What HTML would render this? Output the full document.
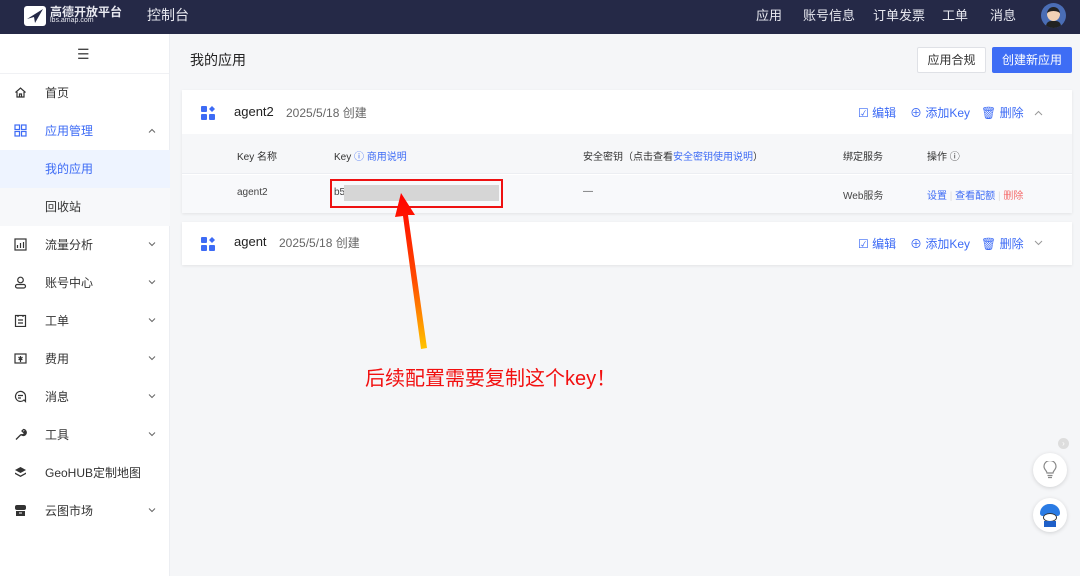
<!DOCTYPE html>
<html><head><meta charset="utf-8"><style>
*{margin:0;padding:0;box-sizing:border-box}
body{width:1080px;height:576px;overflow:hidden;background:#f5f6f8;font-family:"Liberation Sans","Noto Sans CJK SC",sans-serif;font-size:12px;color:#333;position:relative}
.abs{position:absolute}
.hdr{left:0;top:0;width:1080px;height:34px;background:#252947}
.hdr span{position:absolute;color:#e8e9f0;font-size:13px;top:5px}
.side{left:0;top:34px;width:170px;height:542px;background:#fff;border-right:1px solid #eceef2}
.mi{position:absolute;left:0;width:170px;height:38px;font-size:12px;color:#333}
.mi .t{position:absolute;left:45px;top:10px}
.mi .ic{position:absolute;left:14px;top:12px;width:13px;height:13px}
.mi .ch{position:absolute;left:148px;top:16px;width:8px;height:5px}
.card{position:absolute;left:182px;width:890px;background:#fff;box-shadow:0 1px 3px rgba(0,0,0,.08)}
.blue{color:#3d6bf5}
.act{position:absolute;font-size:12px;color:#3d6bf5}
</style></head><body>
<div class="abs hdr">
  <svg class="abs" style="left:23px;top:5px" width="24" height="22" viewBox="0 0 24 22"><rect x="1" y="1" width="22" height="20" rx="3" fill="#fff"/><path d="M4 14 L20 4 L12 18 L11 12 Z" fill="#252947"/></svg>
  <span style="left:50px;top:3px;font-size:12px;font-weight:bold">高德开放平台</span>
  <span style="left:50px;top:17px;font-size:7px">lbs.amap.com</span>
  <span style="left:147px;top:5px;font-size:14px">控制台</span>
  <span style="left:756px">应用</span><span style="left:803px">账号信息</span><span style="left:873px">订单发票</span><span style="left:942px">工单</span><span style="left:990px">消息</span>
  <div class="abs" style="left:1041px;top:3px;width:25px;height:25px;border-radius:50%;background:#4a6db5;overflow:hidden"><div class="abs" style="left:6px;top:4px;width:13px;height:14px;border-radius:50%;background:#f2d2b5;border-top:4px solid #222"></div><div class="abs" style="left:5px;top:18px;width:15px;height:8px;background:#222;border-radius:5px 5px 0 0"></div></div>
</div>
<div class="abs side">
  <div class="abs" style="left:77px;top:12px;font-size:14px;color:#444">☰</div>
  <div class="abs" style="left:0;top:39px;width:169px;height:1px;background:#f0f1f4"></div>
  <div class="mi" style="top:40px"><svg class="ic" viewBox="0 0 13 13"><path d="M1.5 6.5L6.5 2l5 4.5M3 6v5h7V6M5.5 11V8h2v3" fill="none" stroke="#333" stroke-width="1.2"/></svg><span class="t">首页</span></div>
  <div class="mi" style="top:78px;color:#3d6bf5"><svg class="ic" viewBox="0 0 13 13" fill="none" stroke="#3d6bf5" stroke-width="1.2"><rect x="1" y="1" width="4.5" height="4.5"/><rect x="7.5" y="1" width="4.5" height="4.5"/><rect x="1" y="7.5" width="4.5" height="4.5"/><rect x="7.5" y="7.5" width="4.5" height="4.5"/></svg><span class="t">应用管理</span><svg class="ch" viewBox="0 0 8 5"><path d="M1 4.5L4 1.5 7 4.5" fill="none" stroke="#666"/></svg></div>
  <div class="mi" style="top:116px;background:#eef4ff;color:#3d6bf5"><span class="t">我的应用</span></div>
  <div class="mi" style="top:154px;background:#f7f8fa"><span class="t">回收站</span></div>
  <div class="mi" style="top:192px"><svg class="ic" viewBox="0 0 13 13" fill="none" stroke="#333" stroke-width="1.2"><rect x="1" y="1" width="11" height="11"/><path d="M3.5 10V7M6.5 10V5M9.5 10V4"/></svg><span class="t">流量分析</span><svg class="ch" viewBox="0 0 8 5"><path d="M1 .5L4 3.5 7 .5" fill="none" stroke="#666"/></svg></div>
  <div class="mi" style="top:230px"><svg class="ic" viewBox="0 0 13 13" fill="none" stroke="#333" stroke-width="1.2"><circle cx="6.5" cy="4" r="2.8"/><rect x="1.5" y="8.5" width="10" height="3.5" rx="1.7"/></svg><span class="t">账号中心</span><svg class="ch" viewBox="0 0 8 5"><path d="M1 .5L4 3.5 7 .5" fill="none" stroke="#666"/></svg></div>
  <div class="mi" style="top:268px"><svg class="ic" viewBox="0 0 13 13" fill="none" stroke="#333" stroke-width="1.2"><rect x="1.5" y="1.5" width="10" height="11"/><path d="M4 1v2M9 1v2M4 6h5M4 9h5"/></svg><span class="t">工单</span><svg class="ch" viewBox="0 0 8 5"><path d="M1 .5L4 3.5 7 .5" fill="none" stroke="#666"/></svg></div>
  <div class="mi" style="top:306px"><svg class="ic" viewBox="0 0 13 13" fill="none" stroke="#333" stroke-width="1.2"><rect x="1" y="2" width="11" height="9"/><path d="M6.5 4v6M4.5 5l2 2 2-2M4.5 7.5h4"/></svg><span class="t">费用</span><svg class="ch" viewBox="0 0 8 5"><path d="M1 .5L4 3.5 7 .5" fill="none" stroke="#666"/></svg></div>
  <div class="mi" style="top:344px"><svg class="ic" viewBox="0 0 13 13" fill="none" stroke="#333" stroke-width="1.2"><path d="M11.5 11.5L10 10A5 5 0 1 1 11.5 6.5Z"/><path d="M4 5.5h5M4 8h3"/></svg><span class="t">消息</span><svg class="ch" viewBox="0 0 8 5"><path d="M1 .5L4 3.5 7 .5" fill="none" stroke="#666"/></svg></div>
  <div class="mi" style="top:382px"><svg class="ic" viewBox="0 0 13 13" fill="none" stroke="#333" stroke-width="1.3"><path d="M2 11.5L7 6.5M7 6.5a3 3 0 1 0 2.5-5L8 3l1.5 1.5L11 3a3 3 0 0 1-4 3.5"/></svg><span class="t">工具</span><svg class="ch" viewBox="0 0 8 5"><path d="M1 .5L4 3.5 7 .5" fill="none" stroke="#666"/></svg></div>
  <div class="mi" style="top:420px"><svg class="ic" viewBox="0 0 13 13" fill="#333"><path d="M6.5 1L12 4 6.5 7 1 4Z"/><path d="M1 6.5L6.5 9.5 12 6.5v1.5L6.5 11 1 8Z"/></svg><span class="t">GeoHUB定制地图</span></div>
  <div class="mi" style="top:458px"><svg class="ic" viewBox="0 0 13 13" fill="#333"><rect x="1" y="1" width="11" height="5" rx="2"/><rect x="2" y="7" width="9" height="5"/><rect x="5" y="8.5" width="3" height="1" fill="#fff"/></svg><span class="t">云图市场</span><svg class="ch" viewBox="0 0 8 5"><path d="M1 .5L4 3.5 7 .5" fill="none" stroke="#666"/></svg></div>
</div>
<div class="abs" style="left:190px;top:50px;font-size:14px;color:#222">我的应用</div>
<div class="abs" style="left:917px;top:47px;width:69px;height:26px;background:#fff;border:1px solid #dfe1e6;border-radius:2px;text-align:center;line-height:24px;color:#333">应用合规</div>
<div class="abs" style="left:992px;top:47px;width:80px;height:26px;background:#3e6df5;border-radius:2px;text-align:center;line-height:26px;color:#fff">创建新应用</div>

<div class="card" style="top:90px;height:123px">
  <svg class="abs" style="left:19px;top:16px" width="14" height="14" viewBox="0 0 14 14" fill="#3d6bf5"><rect x="0" y="0" width="6" height="6" rx="1"/><rect x="0" y="8" width="6" height="6" rx="1"/><rect x="8" y="8" width="6" height="6" rx="1"/><path d="M11 0l3 3-3 3-3-3z"/></svg>
  <div class="abs" style="left:52px;top:14px;font-size:13px;color:#222">agent2</div>
  <div class="abs" style="left:104px;top:14px;font-size:12px;color:#666">2025/5/18 创建</div>
  <div class="act" style="left:676px;top:14px">☑ 编辑</div>
  <div class="act" style="left:728px;top:14px">⊕ 添加Key</div>
  <div class="act" style="left:799px;top:14px">🗑 删除</div>
  <svg class="abs" style="left:852px;top:20px" width="9" height="6" viewBox="0 0 9 6"><path d="M1 5L4.5 1.5 8 5" fill="none" stroke="#999"/></svg>
  <div class="abs" style="left:0;top:44px;width:890px;height:40px;background:#f6f7f9;border-bottom:1px solid #eceef2"></div>
  <div class="abs" style="left:55px;top:58px;font-size:10px;color:#333">Key 名称</div>
  <div class="abs" style="left:152px;top:58px;font-size:10px;color:#333">Key <span class="blue">ⓘ 商用说明</span></div>
  <div class="abs" style="left:401px;top:58px;font-size:10px;color:#333">安全密钥（点击查看<span class="blue">安全密钥使用说明</span>）</div>
  <div class="abs" style="left:661px;top:58px;font-size:10px;color:#333">绑定服务</div>
  <div class="abs" style="left:745px;top:58px;font-size:10px;color:#333">操作 ⓘ</div>
  <div class="abs" style="left:0;top:85px;width:890px;height:38px;background:#f8f9fb"></div>
  <div class="abs" style="left:55px;top:97px;font-size:10px;color:#444">agent2</div>
  <div class="abs" style="left:152px;top:97px;font-size:10px;color:#444">b5c</div>
  <div class="abs" style="left:162px;top:95px;width:155px;height:16px;background:#d6d6d6"></div>
  <div class="abs" style="left:148px;top:89px;width:173px;height:29px;border:2px solid #ee1111"></div>
  <div class="abs" style="left:401px;top:96px;font-size:10px;color:#555">—</div>
  <div class="abs" style="left:661px;top:97px;font-size:10px;color:#444">Web服务</div>
  <div class="abs" style="left:745px;top:97px;font-size:10px"><span class="blue">设置</span> <span style="color:#ddd">|</span> <span class="blue">查看配额</span> <span style="color:#ddd">|</span> <span style="color:#f56c6c">删除</span></div>
</div>
<div class="card" style="top:222px;height:43px">
  <svg class="abs" style="left:19px;top:15px" width="14" height="14" viewBox="0 0 14 14" fill="#3d6bf5"><rect x="0" y="0" width="6" height="6" rx="1"/><rect x="0" y="8" width="6" height="6" rx="1"/><rect x="8" y="8" width="6" height="6" rx="1"/><path d="M11 0l3 3-3 3-3-3z"/></svg>
  <div class="abs" style="left:52px;top:12px;font-size:13px;color:#222">agent</div>
  <div class="abs" style="left:97px;top:12px;font-size:12px;color:#666">2025/5/18 创建</div>
  <div class="act" style="left:676px;top:13px">☑ 编辑</div>
  <div class="act" style="left:728px;top:13px">⊕ 添加Key</div>
  <div class="act" style="left:799px;top:13px">🗑 删除</div>
  <svg class="abs" style="left:852px;top:18px" width="9" height="6" viewBox="0 0 9 6"><path d="M1 1L4.5 4.5 8 1" fill="none" stroke="#999"/></svg>
</div>
<svg class="abs" style="left:380px;top:185px" width="70" height="170" viewBox="0 0 70 170">
  <defs><linearGradient id="g" x1="0" y1="0" x2="0" y2="1"><stop offset="0" stop-color="#ff0000"/><stop offset=".55" stop-color="#ff4a00"/><stop offset="1" stop-color="#ffc400"/></linearGradient></defs>
  <path d="M21 8 L35 30 L28 30 L47 163 L41 164 L23 31 L15 32 Z" fill="url(#g)"/>
</svg>
<div class="abs" style="left:365px;top:362px;font-size:20px;color:#f21010">后续配置需要复制这个key！</div>
<div class="abs" style="left:1058px;top:438px;width:11px;height:11px;border-radius:50%;background:#ddd;color:#fff;font-size:8px;text-align:center;line-height:11px">›</div>
<div class="abs" style="left:1033px;top:453px;width:34px;height:34px;border-radius:50%;background:#fff;box-shadow:0 1px 4px rgba(0,0,0,.15)"><svg class="abs" style="left:10px;top:8px" width="14" height="18" viewBox="0 0 14 18" fill="none" stroke="#888" stroke-width="1.2"><path d="M4 12C4 10 1 8.5 1 5.5a6 6 0 0 1 12 0C13 8.5 10 10 10 12Z"/><path d="M4.5 14.5h5M5 16.5h4"/></svg></div>
<div class="abs" style="left:1033px;top:498px;width:34px;height:34px;border-radius:50%;background:#fff;box-shadow:0 1px 4px rgba(0,0,0,.15)"><div class="abs" style="left:7px;top:6px;width:20px;height:12px;border-radius:10px 10px 3px 3px;background:#2a7be4"></div><div class="abs" style="left:10px;top:15px;width:14px;height:9px;border-radius:50%;background:#fff;border:1px solid #333"></div><div class="abs" style="left:11px;top:23px;width:12px;height:6px;background:#1e5fc8"></div></div>
</body></html>
